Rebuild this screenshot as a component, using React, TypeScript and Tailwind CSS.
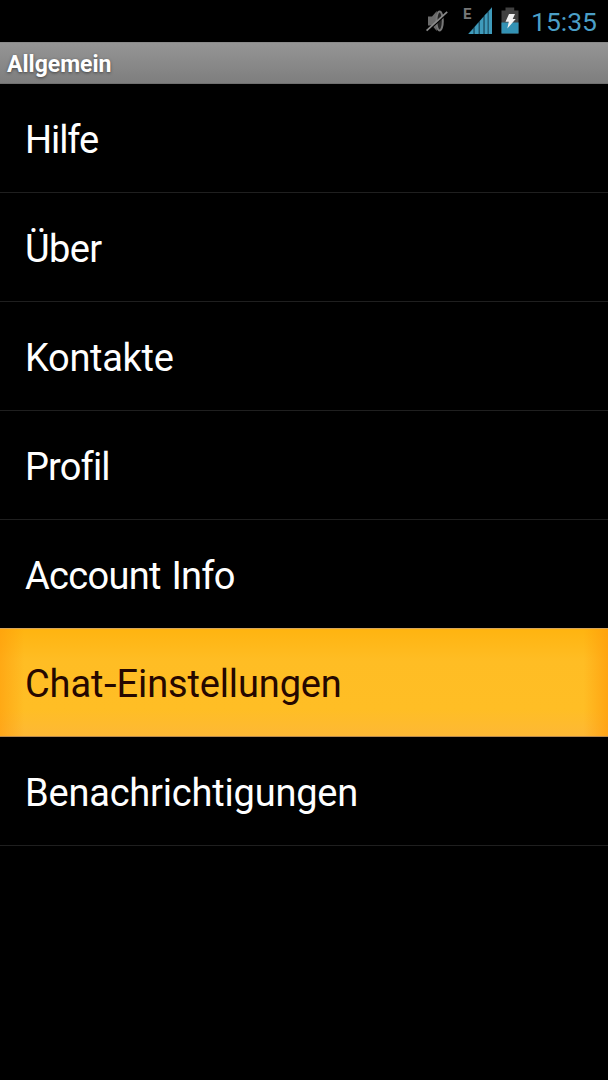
import React from 'react';

interface MenuItem {
  label: React.ReactNode;
  className: string;
  selected?: boolean;
}

const ITEMS: MenuItem[] = [
  { label: 'Hilfe', className: 'h-[109px] border-[#1f1f1f] tracking-[-1.1px]' },
  { label: 'Über', className: 'h-[109px] border-[#1f1f1f] tracking-[-0.6px]' },
  { label: 'Kontakte', className: 'h-[109px] border-[#1f1f1f] tracking-[-0.3px]' },
  { label: 'Profil', className: 'h-[109px] border-[#1f1f1f] tracking-[-0.85px]' },
  { label: 'Account Info', className: 'h-[109px] border-[#d9a65a] tracking-[-0.7px] [word-spacing:2px]' },
  {
    label: (
      <>
        Chat<span className="inline-block scale-x-120 mx-[1.5px]">-</span>Einstellungen
      </>
    ),
    className: 'h-[108px] border-[#b98a4c] tracking-[-0.14px]',
    selected: true,
  },
  { label: 'Benachrichtigungen', className: 'h-[109px] border-[#1f1f1f] tracking-[-0.2px]' },
];

const MutedIcon: React.FC = () => (
  <svg width="22" height="24" viewBox="0 0 22 24" fill="none">
    <path d="M2 7.5h4L10.8 2v20L6 16.5H2z" fill="#6a6a6a" />
    <ellipse cx="13.6" cy="12" rx="3.2" ry="9.6" fill="#222" stroke="#777" strokeWidth="2" />
    <path d="M0.8 23L21.4 4.4" stroke="#000" strokeWidth="1.6" />
    <path d="M0.6 21.6L21.2 2.8" stroke="#8a8a8a" strokeWidth="1.7" />
  </svg>
);

const SignalIcon: React.FC = () => (
  <svg width="24" height="27" viewBox="0 0 25 27" preserveAspectRatio="none">
    <path d="M0 27L25 0V27z" fill="#1d4d61" />
    <path d="M0.5 27L5.6 21.5V27zM7 27V20L11 15.6V27zM12.4 27V13.9L16 10V27zM17.4 27V8.2L20.4 5.4V27zM21.6 27V4.2L25 0.4V27z" fill="#3f9bbb" />
  </svg>
);

const BatteryIcon: React.FC = () => (
  <svg width="18" height="27" viewBox="0 0 18 27">
    <path d="M4.5 0.5h8.7v3H17.5V26.5H0.5V3.5h4z" fill="#414141" />
    <path d="M0.5 15.5h17v11h-17z" fill="#3392b4" />
    <path d="M8 7h6l-2.3 5h3L6.3 21.5l1.5-6.7H4.5z" fill="#f2f2f2" />
  </svg>
);

const StatusBar: React.FC = () => (
  <div className="h-[42px] flex items-start pl-[426px]">
    <div className="pt-[9px]">
      <MutedIcon />
    </div>
    <span className="w-[9px] ml-[15px] pt-[7px] text-[15px] leading-[15px] font-bold text-[#777]">E</span>
    <div className="ml-[-4px] pt-[7px]">
      <SignalIcon />
    </div>
    <div className="ml-[9px] pt-[7px]">
      <BatteryIcon />
    </div>
    <span className="ml-[12px] pt-[7px] text-[26.5px] leading-[29px] text-[#4b9fc6]">15:35</span>
  </div>
);

const App: React.FC = () => {
  return (
    <div className="w-[608px] h-[1080px] overflow-hidden bg-black font-['Roboto',sans-serif]">
      <StatusBar />
      <div className="h-[42px] flex items-center pl-[7px] pt-[3px] bg-linear-to-b from-[#959595] to-[#7e7e7e] border-t border-b border-t-[#8a8a8a] border-b-[#707070]">
        <h1 className="text-[23px] leading-none font-bold text-white [text-shadow:0_1px_3px_rgba(0,0,0,0.5)]">Allgemein</h1>
      </div>
      <ul>
        {ITEMS.map((item, index) => (
          <li
            key={index}
            className={`flex items-center pl-[25px] pt-[3px] text-[38px] leading-none border-b ${item.className} ${
              item.selected
                ? 'text-[#260800] bg-[linear-gradient(90deg,rgba(255,155,10,0.6),transparent_4%,transparent_96%,rgba(255,155,10,0.7)),linear-gradient(180deg,#ffb410,#ffbd24_30%,#ffbe25_75%,#fdb835)]'
                : 'text-white'
            }`}
          >
            <span>{item.label}</span>
          </li>
        ))}
      </ul>
    </div>
  );
};

export default App;
